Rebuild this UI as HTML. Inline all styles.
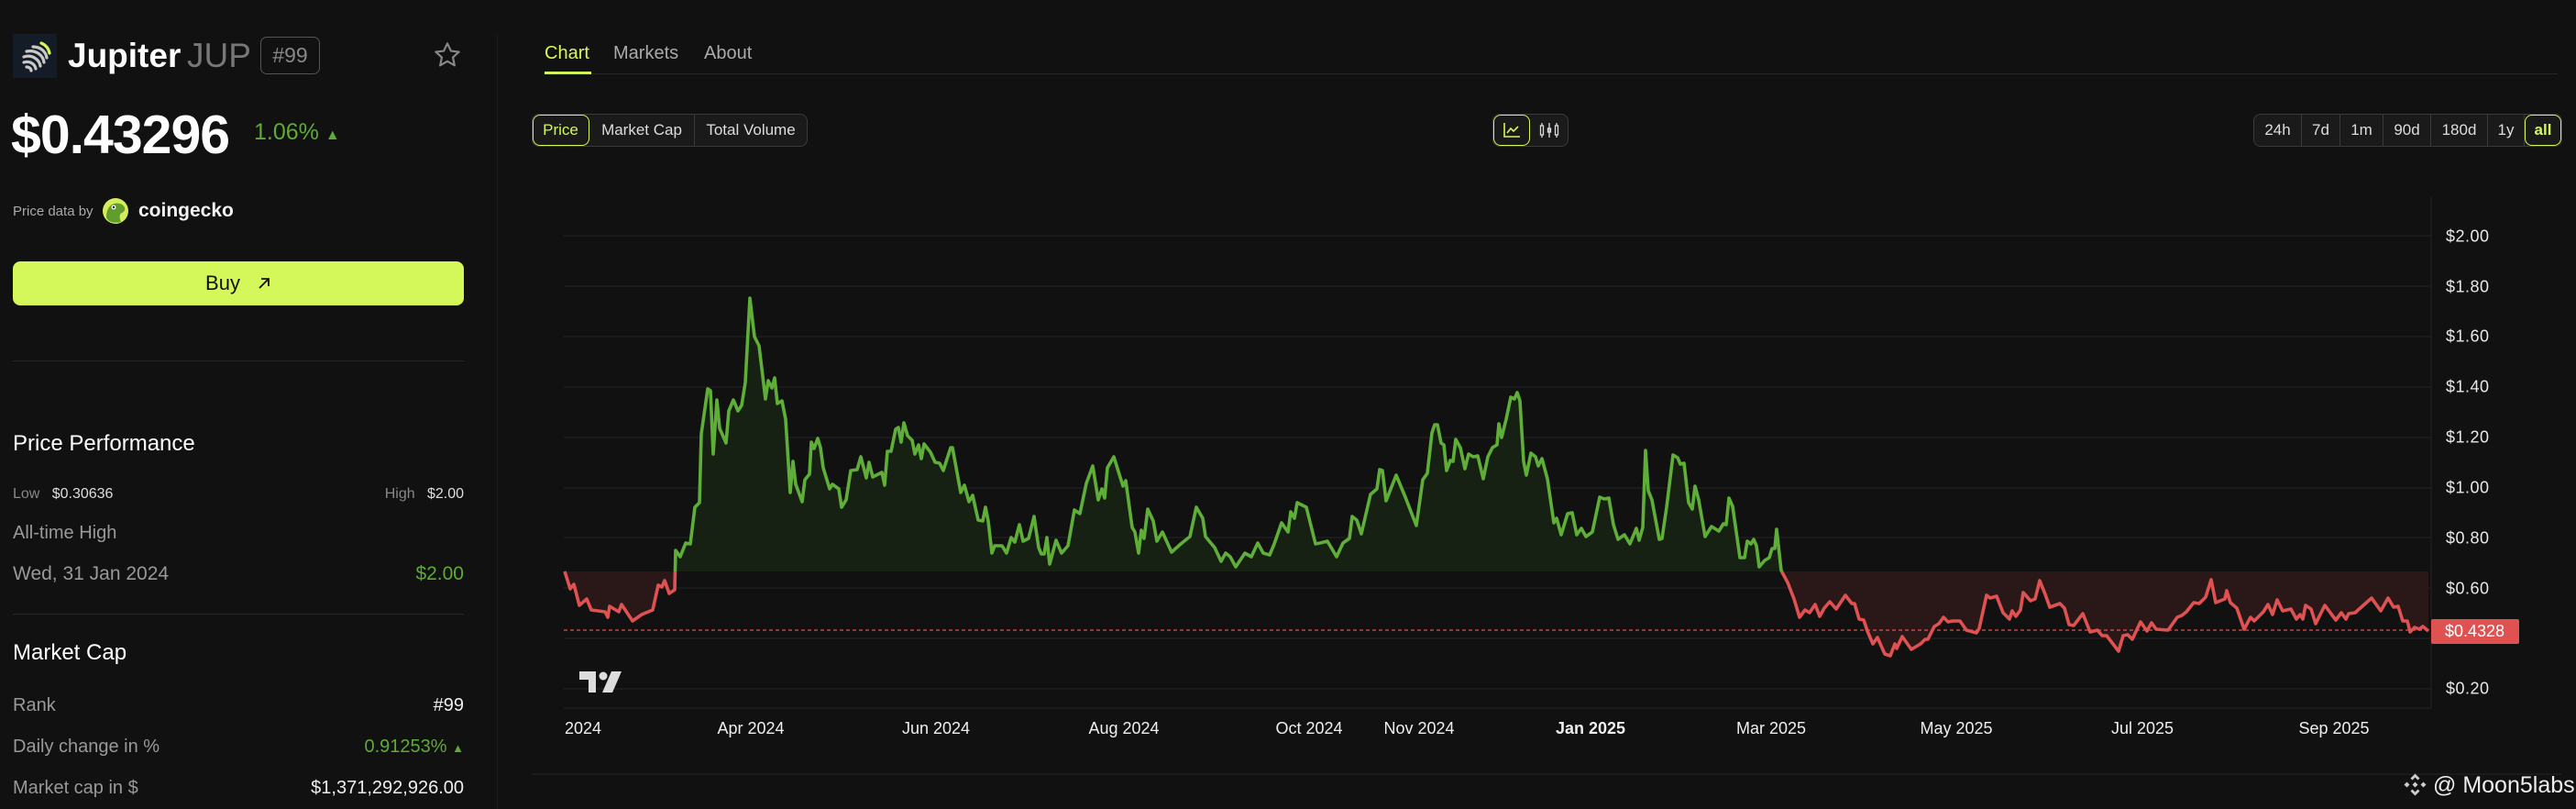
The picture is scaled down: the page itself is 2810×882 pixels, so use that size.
<!DOCTYPE html>
<html><head><meta charset="utf-8"><style>
*{margin:0;padding:0;box-sizing:border-box}
body{width:2810px;height:882px;background:#111;overflow:hidden;position:relative;font-family:"Liberation Sans",Arial,sans-serif;color:#fff}
.a{position:absolute;white-space:nowrap}
.seg{position:absolute;top:124px;height:36px;border:1px solid #3a3a3a;background:#1a1a1a;border-radius:8px;display:flex;overflow:hidden}
.seg div{height:100%;display:flex;align-items:center;justify-content:center;font-size:17px;color:#ddd;border-right:1px solid #3a3a3a}
.seg div:last-child{border-right:none}
.seg .on{color:#d4f75a;outline:1.5px solid #d4f75a;outline-offset:-1.5px;border-radius:8px}
.row{position:absolute;left:14px;width:492px;display:flex;justify-content:space-between;align-items:center}
.yl{position:absolute;left:2668px;font-size:18px;color:#e8e8e8;transform:translateY(-50%);letter-spacing:.5px}
.xl{position:absolute;top:784px;font-size:18px;color:#eee;transform:translateX(-50%)}
</style></head><body>

<div class="a" style="left:14px;top:37px;width:48px;height:48px;background:#141c28"></div>
<svg class="a" style="left:14px;top:37px" width="48" height="48" viewBox="0 0 48 48">
<g fill="none" stroke-linecap="round" stroke-width="3.2">
<path d="M31 10 C36 12 39 16 40 21" stroke="#d4f75a"/>
<path d="M22 14 C30 14 36 19 37 26" stroke="#c8c8c8"/>
<path d="M15 19 C25 17 33 23 34 31" stroke="#c8c8c8"/>
<path d="M12 25 C21 22 29 28 30 35" stroke="#c8c8c8"/>
<path d="M12 31 C19 29 24 33 25 38" stroke="#c8c8c8"/>
<path d="M15 36 C18 36 20 38 20 40" stroke="#c8c8c8"/>
</g></svg>
<div class="a" style="left:74px;top:40px;font-size:37px;font-weight:bold;color:#fff">Jupiter</div>
<div class="a" style="left:204px;top:40px;font-size:37px;color:#777">JUP</div>
<div class="a" style="left:284px;top:40px;width:65px;height:41px;border:1.5px solid #555;border-radius:7px;font-size:23px;color:#888;text-align:center;line-height:38px">#99</div>
<svg class="a" style="left:472px;top:44px" width="32" height="32" viewBox="0 0 24 24"><path d="M12 2.5l2.9 6.2 6.6.7-5 4.5 1.4 6.6L12 17.1 6.1 20.5l1.4-6.6-5-4.5 6.6-.7z" fill="none" stroke="#888" stroke-width="1.6" stroke-linejoin="round"/></svg>

<div class="a" style="left:12px;top:113px;font-size:59px;font-weight:bold;letter-spacing:-1px">$0.43296</div>
<div class="a" style="left:277px;top:130px;font-size:25px;color:#5cac35">1.06% <span style="font-size:16px">▲</span></div>

<div class="a" style="left:14px;top:222px;font-size:15px;color:#aaa">Price data by</div>
<svg class="a" style="left:111px;top:215px" width="30" height="30" viewBox="0 0 30 30"><circle cx="15" cy="15" r="14" fill="#d6ec5a"/><path d="M5 22 C5 10 12 5 20 7 C26 9 27 15 22 17 C19 18 19 22 21 27 C13 29 7 27 5 22Z" fill="#5f9e2c"/><circle cx="13" cy="11" r="2.4" fill="#fff"/><circle cx="13" cy="11" r="1.2" fill="#111"/></svg>
<div class="a" style="left:151px;top:218px;font-size:21px;font-weight:bold;color:#f2f2f2">coingecko</div>

<div class="a" style="left:14px;top:285px;width:492px;height:48px;background:#d4f75a;border-radius:8px;color:#111;font-size:22px;display:flex;align-items:center;justify-content:center">Buy <svg style="margin-left:18px" width="16" height="16" viewBox="0 0 16 16"><path d="M3 13L13 3M5 3h8v8" fill="none" stroke="#111" stroke-width="1.8"/></svg></div>

<div class="a" style="left:14px;top:393px;width:492px;height:1px;background:#262626"></div>
<div class="a" style="left:542px;top:37px;width:1px;height:845px;background:#1c1c1c"></div>

<div class="a" style="left:14px;top:470px;font-size:24px;color:#fff">Price Performance</div>
<div class="row" style="top:530px;font-size:16px"><span><span style="color:#888">Low</span>&nbsp;&nbsp; <span style="color:#ddd">$0.30636</span></span><span><span style="color:#888">High</span>&nbsp;&nbsp; <span style="color:#ddd">$2.00</span></span></div>
<div class="a" style="left:14px;top:570px;font-size:20px;color:#999">All-time High</div>
<div class="row" style="top:614px;font-size:21px"><span style="color:#999">Wed, 31 Jan 2024</span><span style="color:#5cac35">$2.00</span></div>
<div class="a" style="left:14px;top:669px;width:492px;height:1px;background:#262626"></div>
<div class="a" style="left:14px;top:698px;font-size:24px;color:#fff">Market Cap</div>
<div class="row" style="top:758px;font-size:20px"><span style="color:#999">Rank</span><span style="color:#eee">#99</span></div>
<div class="row" style="top:803px;font-size:20px"><span style="color:#999">Daily change in %</span><span style="color:#5cac35">0.91253% <span style="font-size:13px">▲</span></span></div>
<div class="row" style="top:848px;font-size:20px"><span style="color:#999">Market cap in $</span><span style="color:#eee">$1,371,292,926.00</span></div>

<div class="a" style="left:594px;top:47px;font-size:20px;color:#d4f75a">Chart</div>
<div class="a" style="left:669px;top:47px;font-size:20px;color:#aaa">Markets</div>
<div class="a" style="left:768px;top:47px;font-size:20px;color:#aaa">About</div>
<div class="a" style="left:594px;top:80px;width:2196px;height:1px;background:#262626"></div>
<div class="a" style="left:594px;top:78px;width:51px;height:3px;background:#d4f75a"></div>

<div class="seg" style="left:580px;width:301px"><div class="on" style="width:62px">Price</div><div style="width:115px">Market Cap</div><div style="flex:1">Total Volume</div></div>
<div class="seg" style="left:1628px;width:83px"><div class="on" style="width:40px"><svg width="18" height="16" viewBox="0 0 18 16"><path d="M1 0v15h17M4 11l4-5 3 3 5-5" fill="none" stroke="#d4f75a" stroke-width="1.6"/></svg></div><div style="flex:1"><svg width="22" height="16" viewBox="0 0 22 16"><g fill="none" stroke="#ddd" stroke-width="1.3"><rect x="1.5" y="3" width="3" height="10"/><path d="M3 0v3M3 13v3M11 0v16M19 0v3M19 13v3"/><rect x="9.5" y="6" width="3" height="4"/><rect x="17.5" y="3" width="3" height="10"/></g></svg></div></div>
<div class="seg" style="left:2458px;width:337px"><div style="width:52px">24h</div><div style="width:42px">7d</div><div style="width:47px">1m</div><div style="width:52px">90d</div><div style="width:62px">180d</div><div style="width:40px">1y</div><div class="on" style="flex:1;font-weight:bold">all</div></div>

<svg id="main" class="a" style="left:0;top:0" width="2810" height="882">
<defs>
<clipPath id="up"><rect x="0" y="0" width="2810" height="623"/></clipPath>
<clipPath id="dn"><rect x="0" y="623" width="2810" height="300"/></clipPath>
<path id="ln" d="M616,623 L622,642 626,637 632,660 640,653 645,665 660,667 663,673 665,661 675,667 678,659 690,677 700,670 712,665 718,638 722,640 725,633 730,647 736,643 737,600 742,607 748,592 753,593 758,553 763,548 765,473 772,424 775,426 778,495 782,436 785,467 792,483 795,448 800,436 805,448 809,442 813,417 818,325 823,367 828,377 835,435 838,415 842,423 845,412 848,440 853,437 857,457 862,537 865,503 868,528 875,547 878,523 883,517 885,482 888,489 892,478 895,488 898,510 905,533 908,528 915,533 918,553 923,545 928,513 935,512 939,498 945,521 948,504 952,520 962,515 965,529 968,492 972,492 977,468 980,466 983,482 986,461 990,475 995,480 998,495 1002,485 1005,500 1008,484 1015,493 1020,504 1025,505 1029,513 1037,488 1039,488 1048,537 1052,529 1057,547 1061,540 1067,567 1072,568 1075,553 1078,568 1082,603 1085,595 1093,595 1098,603 1103,586 1107,591 1112,572 1116,590 1122,587 1128,563 1133,597 1136,604 1139,604 1142,586 1145,615 1152,589 1158,603 1165,595 1172,556 1178,560 1185,527 1192,508 1198,545 1202,533 1205,543 1208,510 1215,498 1225,530 1228,524 1235,575 1238,580 1242,603 1245,578 1248,587 1252,555 1258,568 1262,590 1268,580 1278,602 1288,593 1298,585 1305,553 1312,565 1315,585 1325,597 1332,612 1337,603 1342,607 1348,618 1358,603 1365,607 1372,592 1378,603 1385,605 1390,593 1398,570 1405,580 1408,558 1412,565 1415,548 1425,553 1435,593 1440,592 1448,590 1458,607 1465,592 1472,587 1475,563 1480,567 1485,582 1495,539 1502,533 1505,512 1508,513 1512,546 1523,518 1533,542 1545,573 1552,523 1557,516 1562,472 1565,463 1568,463 1572,483 1575,485 1578,513 1582,502 1585,503 1588,479 1593,488 1598,511 1602,495 1607,498 1612,497 1618,522 1623,498 1628,488 1633,485 1635,462 1638,477 1643,457 1648,433 1652,435 1655,428 1658,437 1662,503 1665,518 1670,494 1675,498 1678,508 1682,500 1688,522 1695,570 1698,565 1703,583 1710,560 1715,559 1720,583 1725,576 1730,585 1737,580 1745,542 1750,544 1755,543 1760,572 1765,588 1772,583 1778,593 1785,576 1788,589 1792,575 1795,491 1798,535 1802,545 1810,588 1813,587 1818,553 1825,496 1830,499 1833,506 1837,505 1842,548 1846,555 1849,530 1853,545 1860,585 1867,574 1875,579 1880,571 1883,572 1886,543 1890,552 1898,608 1903,608 1906,590 1910,593 1913,588 1916,595 1919,618 1925,611 1930,608 1933,598 1936,598 1938,577 1943,622 1950,635 1957,653 1963,673 1969,665 1974,668 1980,659 1985,672 1990,663 1996,656 2003,664 2013,649 2020,658 2023,658 2028,675 2033,676 2037,688 2043,702 2048,695 2056,713 2062,715 2067,702 2069,707 2075,694 2085,708 2095,702 2100,697 2103,697 2110,683 2115,680 2120,673 2125,678 2130,677 2138,677 2145,687 2156,690 2159,685 2167,649 2171,652 2178,650 2185,668 2192,675 2195,666 2199,672 2204,665 2207,646 2215,655 2220,653 2225,633 2231,648 2236,662 2247,658 2252,663 2257,681 2262,682 2272,669 2280,689 2288,687 2293,693 2298,693 2311,710 2316,693 2321,692 2326,697 2335,678 2342,688 2347,679 2352,686 2365,687 2375,673 2380,671 2385,667 2393,657 2399,658 2406,651 2412,632 2417,657 2427,653 2429,644 2433,657 2440,663 2448,686 2455,673 2459,677 2469,667 2474,659 2479,670 2484,654 2490,666 2499,664 2505,675 2509,670 2512,675 2515,660 2521,664 2526,680 2536,660 2548,676 2554,668 2559,675 2562,669 2569,668 2587,652 2597,666 2605,652 2611,662 2616,661 2621,677 2626,677 2629,689 2634,684 2639,686 2643,683 2649,688"/>
</defs>
<g stroke="#222" stroke-width="1.2">
<line x1="615" x2="2652" y1="257" y2="257"/><line x1="615" x2="2652" y1="312" y2="312"/><line x1="615" x2="2652" y1="367" y2="367"/><line x1="615" x2="2652" y1="422" y2="422"/><line x1="615" x2="2652" y1="477" y2="477"/><line x1="615" x2="2652" y1="532" y2="532"/><line x1="615" x2="2652" y1="586" y2="586"/><line x1="615" x2="2652" y1="641" y2="641"/><line x1="615" x2="2652" y1="696" y2="696"/><line x1="615" x2="2652" y1="751" y2="751"/>
<line x1="615" x2="2652" y1="772" y2="772"/>
<line x1="2652" x2="2652" y1="215" y2="772"/>
</g>
<g id="fills"></g>
<line x1="615" x2="2652" y1="687" y2="687" stroke="#e05252" stroke-width="1.2" stroke-dasharray="4 3"/>
<use href="#ln" fill="none" stroke="#5fae38" stroke-width="3.6" stroke-linejoin="round" clip-path="url(#up)"/>
<use href="#ln" fill="none" stroke="#e05252" stroke-width="3.6" stroke-linejoin="round" clip-path="url(#dn)"/>
<g fill="#ddd"><path d="M632,732 H650 V755 H642 V741 H632Z"/><circle cx="658" cy="737" r="4.5"/><path d="M667,732 H678 L668,755 H657Z"/></g>
<line x1="580" x2="2795" y1="844" y2="844" stroke="#222" stroke-width="1.2"/>
<g fill="#ccc" transform="translate(2634.5,855.5)"><path d="M0,-12 L5,-7 L3,-5 L0,-8 L-3,-5 L-5,-7Z"/><path d="M0,12 L5,7 L3,5 L0,8 L-3,5 L-5,7Z"/><path d="M-12,0 L-9,-3 L-6,0 L-9,3Z"/><path d="M12,0 L9,-3 L6,0 L9,3Z"/><path d="M0,-3 L3,0 L0,3 L-3,0Z"/></g>
</svg>

<div class="a" style="left:2652px;top:675px;width:96px;height:27px;background:#e05252;border-radius:2px;font-size:18px;line-height:27px;padding-left:15px;color:#fff">$0.4328</div>
<div class="yl" style="top:258px">$2.00</div><div class="yl" style="top:313px">$1.80</div><div class="yl" style="top:367px">$1.60</div><div class="yl" style="top:422px">$1.40</div><div class="yl" style="top:477px">$1.20</div><div class="yl" style="top:532px">$1.00</div><div class="yl" style="top:587px">$0.80</div><div class="yl" style="top:642px">$0.60</div><div class="yl" style="top:751px">$0.20</div>

<div class="xl" style="left:636px">2024</div>
<div class="xl" style="left:819px">Apr 2024</div>
<div class="xl" style="left:1021px">Jun 2024</div>
<div class="xl" style="left:1226px">Aug 2024</div>
<div class="xl" style="left:1428px">Oct 2024</div>
<div class="xl" style="left:1548px">Nov 2024</div>
<div class="xl" style="left:1735px;font-weight:bold">Jan 2025</div>
<div class="xl" style="left:1932px">Mar 2025</div>
<div class="xl" style="left:2134px">May 2025</div>
<div class="xl" style="left:2337px">Jul 2025</div>
<div class="xl" style="left:2546px">Sep 2025</div>

<div class="a" style="left:2654px;top:842px;font-size:25px;color:#eee">@ Moon5labs</div>

<script>
(function(){
var d=document.getElementById('ln').getAttribute('d')+' L2649,623 L616,623 Z';
var ns='http://www.w3.org/2000/svg';
var g=document.getElementById('fills');
var p1=document.createElementNS(ns,'path');p1.setAttribute('d',d);p1.setAttribute('fill','#172113');p1.setAttribute('clip-path','url(#up)');
var p2=document.createElementNS(ns,'path');p2.setAttribute('d',d);p2.setAttribute('fill','#2a1819');p2.setAttribute('clip-path','url(#dn)');
g.appendChild(p1);g.appendChild(p2);
})();
</script>
</body></html>
